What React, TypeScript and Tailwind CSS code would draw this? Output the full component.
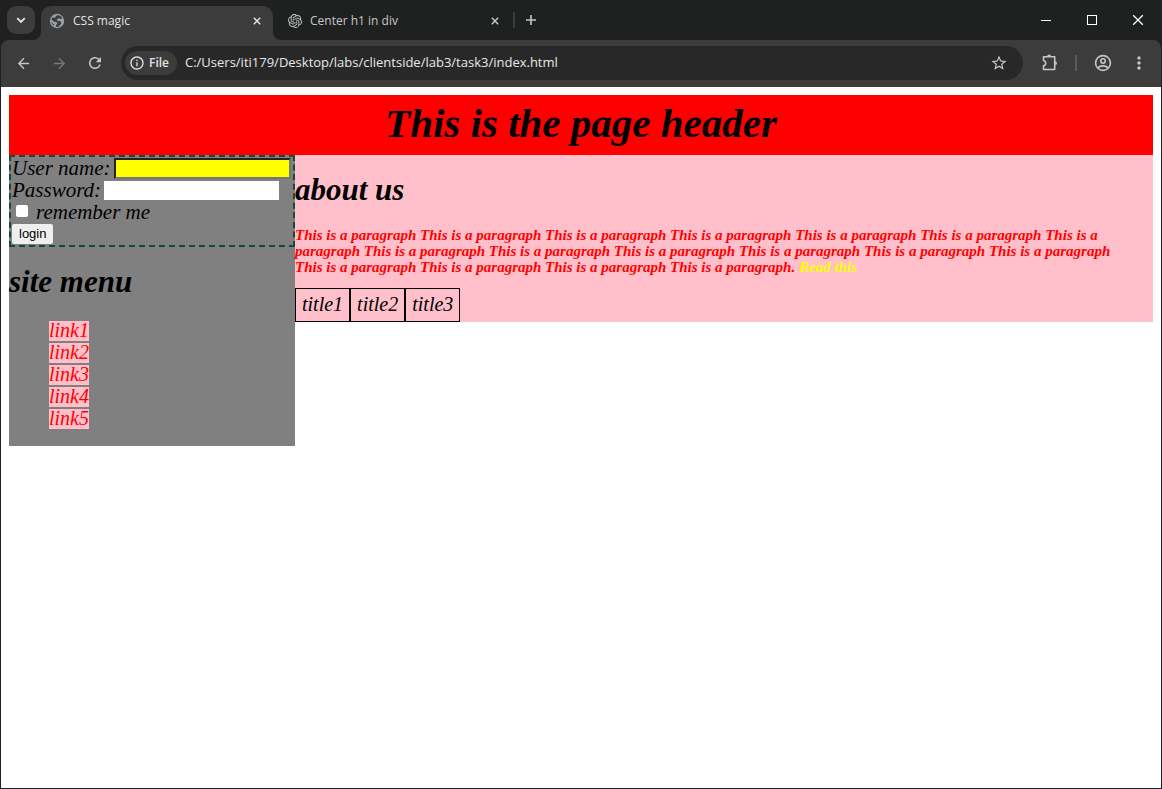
import { SiOpenai } from "react-icons/si";
import { MdArrowBack, MdArrowForward, MdInfoOutline, MdMoreVert, MdRefresh, MdStarBorder } from "react-icons/md";

const phrase = "This is a paragraph";
const links = ["link1", "link2", "link3", "link4", "link5"];
const titles = ["title1", "title2", "title3"];

function Cross({ className }: { className: string }) {
  return (
    <svg viewBox="0 0 10 10" className={className} fill="none" stroke="currentColor">
      <path d="M1 1 9 9M9 1 1 9" />
    </svg>
  );
}

function Chevron() {
  return (
    <svg viewBox="0 0 16 16" className="size-4" fill="none" stroke="currentColor" strokeWidth="1.9">
      <path d="m4.200 6.200 3.800 3.800 3.800-3.800" />
    </svg>
  );
}

function Globe() {
  return (
    <svg viewBox="0 0 16 16" className="size-4">
      <circle cx="8" cy="8" r="7.2" fill="#9aa0a6" />
      <path
        d="M9.4 2.2c1.8.3 3.2 1.5 3.9 3l-1.6.9-1.5-.8-1.8.6-.6 1.3 1.3.8 2.3.2 1 1.2-.7 1.9-1.8 2.2c-1 .4-2 .5-3 .3l.2-1.9 1.4-1.3-1-1.5-2.3-.3L3.4 7.2 2.3 6.8c.2-.9.7-1.8 1.3-2.5l1.6.6 1.4-.8.2-1.3Z"
        fill="#3c3c3c"
      />
      <path d="m2.3 9 2.4 2.2.6 1.8C3.7 12.1 2.6 10.7 2.3 9Z" fill="#3c3c3c" />
    </svg>
  );
}

function Puzzle() {
  return (
    <svg viewBox="0 0 20 20" className="size-5" fill="none" stroke="currentColor" strokeWidth="1.6">
      <path d="M4.500 3.800h11.200v12.700H4.500v-3.700a2.700 2.700 0 0 0 0-5.300Z" strokeLinejoin="round" />
      <path d="M8.200 3.400a1.900 1.900 0 0 1 3.800 0ZM16.100 8.200a1.900 1.900 0 0 1 0 3.800Z" fill="currentColor" stroke="none" />
    </svg>
  );
}

function Person() {
  return (
    <svg viewBox="0 0 18 18" className="size-[18px]" fill="none" stroke="currentColor" strokeWidth="1.6">
      <circle cx="9" cy="9" r="7.4" />
      <circle cx="9" cy="7" r="2.2" />
      <path d="M3.8 13.8c2.8-2.6 7.6-2.6 10.4 0" />
    </svg>
  );
}

function TabStrip() {
  return (
    <div className="flex h-10 items-end pl-1.5 text-xs text-[#e3e3e3]">
      <button aria-label="Search tabs" className="mb-1.5 flex size-7 items-center justify-center rounded-[9px] bg-[#3c3c3c]">
        <Chevron />
      </button>
      <svg viewBox="0 0 8 8" className="-ml-0.5 size-2 text-[#3c3c3c]" fill="currentColor">
        <path d="M8 0v8H0a8 8 0 0 0 8-8Z" />
      </svg>
      <div className="flex h-[34px] w-[232px] items-center rounded-t-[10px] bg-[#3c3c3c] pb-1 pl-2 pr-3">
        <Globe />
        <span className="ml-2 flex-1">CSS magic</span>
        <button aria-label="Close CSS magic">
          <Cross className="size-2 stroke-[1.8]" />
        </button>
      </div>
      <svg viewBox="0 0 8 8" className="size-2 text-[#3c3c3c]" fill="currentColor">
        <path d="M0 0v8h8a8 8 0 0 1-8-8Z" />
      </svg>
      <div className="flex h-[34px] w-[232px] items-center pb-1 pl-[7px] pr-3.5 text-[#c7c7c7]">
        <SiOpenai className="size-[14px]" />
        <span className="ml-2 flex-1">Center h1 in div</span>
        <button aria-label="Close Center h1 in div">
          <Cross className="size-2 stroke-[1.8]" />
        </button>
      </div>
      <div className="mb-3 h-4 w-0.5 bg-[#3c3c3c]" />
      <button aria-label="New tab" className="mb-3.5 ml-2.5">
        <svg viewBox="0 0 12 12" className="size-3" fill="none" stroke="#c7c7c7" strokeWidth="1.6">
          <path d="M6 1v10M1 6h10" />
        </svg>
      </button>
      <div className="ml-auto flex h-10 text-white">
        <button aria-label="Minimize" className="flex w-[46px] items-center justify-center">
          <span className="h-px w-2.5 bg-white" />
        </button>
        <button aria-label="Maximize" className="flex w-[46px] items-center justify-center">
          <span className="size-2.5 border border-white" />
        </button>
        <button aria-label="Close" className="flex w-[46px] items-center justify-center">
          <Cross className="size-3 stroke-[1.1]" />
        </button>
      </div>
    </div>
  );
}

function Toolbar() {
  return (
    <div className="flex h-[47px] items-center rounded-t-lg bg-[#3c3c3c] pb-px pl-3.5 pr-3 text-[#c7c7c7]">
      <button aria-label="Back">
        <MdArrowBack className="size-[17px]" />
      </button>
      <button aria-label="Forward" className="ml-[19px] text-[#777777]">
        <MdArrowForward className="size-[17px]" />
      </button>
      <button aria-label="Reload" className="ml-[18px]">
        <MdRefresh className="size-[18px]" />
      </button>
      <div className="ml-[17px] flex h-[34px] flex-1 items-center rounded-full bg-[#282828] pl-1 pr-[15px]">
        <button className="flex h-6 items-center gap-1 rounded-full bg-[#3c3c3c] pl-1 pr-2 text-xs font-semibold text-[#e3e3e3]">
          <MdInfoOutline className="size-4" />
          File
        </button>
        <input
          aria-label="Address"
          className="ml-2 min-w-0 flex-1 bg-transparent text-[13px] text-[#e8e8e8] outline-none"
          defaultValue="C:/Users/iti179/Desktop/labs/clientside/lab3/task3/index.html"
        />
        <button aria-label="Bookmark">
          <MdStarBorder className="size-[18px]" />
        </button>
      </div>
      <button aria-label="Extensions" className="ml-4">
        <Puzzle />
      </button>
      <div className="ml-4 h-4 w-0.5 bg-[#5a5a5a]" />
      <button aria-label="Profile" className="ml-[17px]">
        <Person />
      </button>
      <button aria-label="Menu" className="ml-[17px]">
        <MdMoreVert className="size-5" />
      </button>
    </div>
  );
}

function LoginForm() {
  return (
    <form
      className="border-2 border-dashed border-[#134b3b] p-px text-[21px] leading-5"
      onSubmit={(e) => e.preventDefault()}
    >
      <div className="flex h-[22px] items-center gap-[3px]">
        <label htmlFor="user" className="pb-0.5">User name:</label>
        <input
          id="user"
          className="mb-px h-[21px] w-[177px] border-2 border-b-[#767676] border-l-[#222222] border-r-[#767676] border-t-[#222222] bg-[yellow]"
        />
      </div>
      <div className="flex h-[22px] items-center gap-[3px]">
        <label htmlFor="password" className="pb-0.5">Password:</label>
        <input id="password" type="password" className="mb-px h-[19px] w-[175px] bg-white" />
      </div>
      <div className="flex h-[22px] items-center gap-2 pl-1">
        <input
          id="remember"
          type="checkbox"
          className="mb-1 size-3 appearance-none rounded-xs bg-white checked:bg-blue-600"
        />
        <label htmlFor="remember" className="pb-0.5">remember me</label>
      </div>
      <button className="block h-5 rounded-xs bg-[#efefef] px-[7px] font-['Liberation_Sans',sans-serif] text-[13px] leading-5 not-italic">
        login
      </button>
    </form>
  );
}

export default function App() {
  return (
    <div className="flex min-h-screen flex-col border-x border-b border-[#202124] bg-[#1f2020] font-['Open_Sans',sans-serif]">
      <TabStrip />
      <Toolbar />
      <div className="flex-1 bg-white p-2 font-['Lucida_Calligraphy','Liberation_Serif',serif] text-xl leading-[22px] text-black italic">
        <h1 className="bg-[red] pb-1 text-center text-[41px] leading-[56px] font-bold">This is the page header</h1>
        <div className="flex items-start">
          <aside className="w-1/4 bg-[gray] pb-4">
            <LoginForm />
            <h2 className="pt-4 pb-5 text-[31px] leading-[37px] font-bold">site menu</h2>
            <ul className="pl-10">
              {links.map((link) => (
                <li key={link} className="flex h-[22px] items-center">
                  <a href="#" className="h-5 bg-[pink] leading-[18px] text-[red]">
                    {link}
                  </a>
                </li>
              ))}
            </ul>
          </aside>
          <main className="w-3/4 bg-[pink]">
            <h2 className="pt-4 pb-[19px] text-[31px] leading-[37px] font-bold">about us</h2>
            <p className="pb-[13px] text-[15px] leading-4 font-bold text-[red]">
              {Array(6).fill(phrase).join(" ")} This is a<br />
              paragraph {Array(6).fill(phrase).join(" ")}
              <br />
              {Array(4).fill(phrase).join(" ")}. <span className="text-[yellow]">Read this</span>
            </p>
            <ul className="flex">
              {titles.map((title) => (
                <li key={title} className="border border-black px-1.5 pt-1 pb-1.5">
                  {title}
                </li>
              ))}
            </ul>
          </main>
        </div>
      </div>
    </div>
  );
}
